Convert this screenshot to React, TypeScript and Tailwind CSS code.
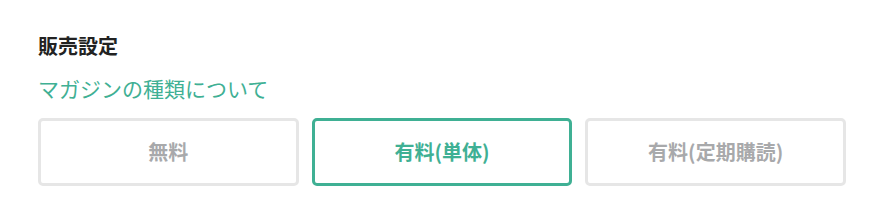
import React, { useState } from 'react';

const options = ['無料', '有料(単体)', '有料(定期購読)'];

export default function App() {
  const [selected, setSelected] = useState(1);

  return (
    <div
      className="w-[884px] h-[218px] bg-white px-[38px] pt-[33px]"
      style={{ fontFamily: '"Noto Sans CJK JP", "Noto Sans", sans-serif' }}
    >
      <h2 className="text-[20px] font-bold leading-[26px] text-[#222222]">販売設定</h2>
      <a href="#" className="mt-[15px] block text-[21px] leading-[28px] text-[#3fb094]">
        マガジンの種類について
      </a>
      <div className="mt-[16px] grid grid-cols-3 gap-[13px]">
        {options.map((label, i) => (
          <button
            key={label}
            onClick={() => setSelected(i)}
            className={`h-[68px] rounded-[5px] border-[3px] bg-white text-[20px] font-bold ${
              selected === i
                ? 'border-[#3fb094] text-[#3fb094]'
                : 'border-[#e6e6e6] text-[#a8a9ab]'
            }`}
          >
            {label}
          </button>
        ))}
      </div>
    </div>
  );
}
